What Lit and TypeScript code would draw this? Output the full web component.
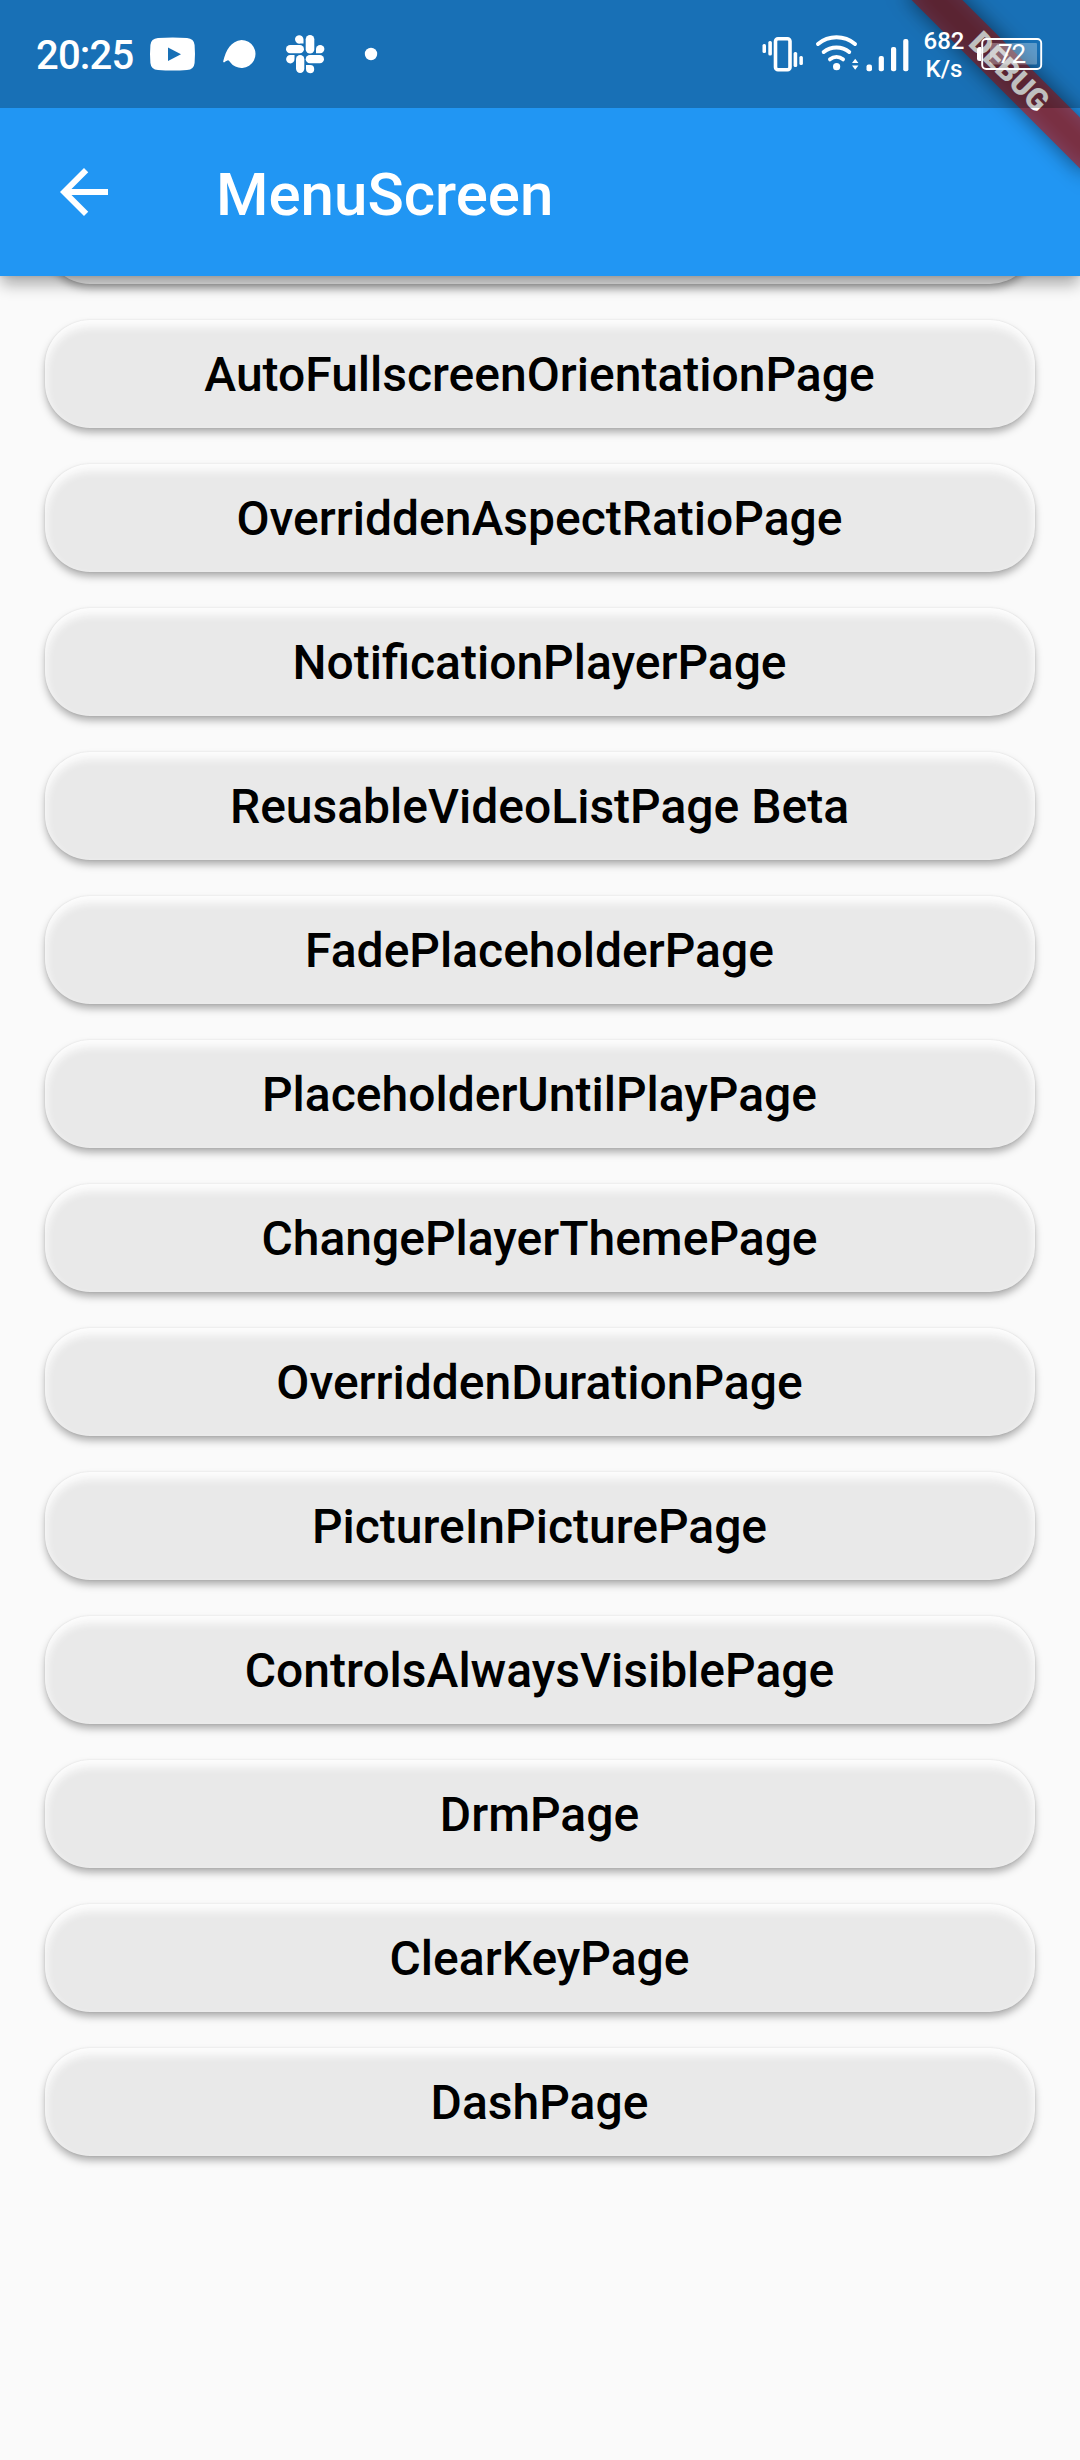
import { LitElement, html, css } from "lit";
import { customElement, property } from "lit/decorators.js";

// The first entry is scrolled under the app bar, only its lower rim shows.
const PAGES = [
  "",
  "AutoFullscreenOrientationPage",
  "OverriddenAspectRatioPage",
  "NotificationPlayerPage",
  "ReusableVideoListPage Beta",
  "FadePlaceholderPage",
  "PlaceholderUntilPlayPage",
  "ChangePlayerThemePage",
  "OverriddenDurationPage",
  "PictureInPicturePage",
  "ControlsAlwaysVisiblePage",
  "DrmPage",
  "ClearKeyPage",
  "DashPage",
];

@customElement("status-bar")
class StatusBar extends LitElement {
  static styles = css`
    :host {
      display: flex;
      box-sizing: border-box;
      height: 108px;
      padding: 0 37px 0 36px;
      align-items: flex-start;
      justify-content: space-between;
      background: rgba(0, 0, 0, 0.25);
      color: #fff;
      font-family: Roboto, "Liberation Sans", sans-serif;
    }
    .side {
      display: flex;
      align-items: flex-start;
    }
    svg {
      display: block;
      flex: none;
      height: 108px;
    }
    .clock {
      width: 113px;
      padding-top: 32px;
      font-size: 40px;
      line-height: 47px;
      font-weight: 500;
      letter-spacing: -0.8px;
      white-space: nowrap;
    }
    .speed {
      width: 50px;
      margin-left: 10px;
      padding-top: 27px;
      font-size: 24px;
      line-height: 28px;
      font-weight: 500;
      text-align: center;
    }
    .battery {
      position: relative;
      margin-left: 7px;
    }
    .level {
      position: absolute;
      left: 22px;
      top: 39px;
      font-size: 26px;
      line-height: 30px;
      letter-spacing: -1px;
    }
  `;

  render() {
    return html`
      <div class="side">
        <div class="clock">20:25</div>
        <svg width="222" viewBox="149 0 222 108" style="overflow:visible" fill="#fff">
          <path d="M158 38q15-1 29 0q7 .5 7.600 7q.8 9 0 18q-.6 6.500-7.600 7q-14 1-29 0q-7-.5-7.600-7q-.8-9 0-18q.6-6.500 7.600-7zM168 47.500v13.500l13-6.700z" fill-rule="evenodd" />
          <path d="M241.500 40a14 14 0 1 1-11.500 22q-1-1.500-2-1.800q-2.500.8-4 2.300q-1-.2-.8-1.200C226 50 231 41 241.500 40z" />
          <g>
            <rect x="305.700" y="35" width="8.600" height="18.500" rx="4.300" />
            <path d="M303.500 43.500h-3.200a4.250 4.250 0 1 1 3.200-4.200z" />
            <rect x="286" y="45" width="18" height="8.300" rx="4.150" />
            <path d="M316 53.300v-4.200a4.200 4.200 0 1 1 4.200 4.200z" />
            <rect x="305.700" y="55" width="18.300" height="8.300" rx="4.150" />
            <path d="M294.500 55v4a4.200 4.200 0 1 1-4.200-4z" />
            <rect x="296" y="55" width="8.300" height="18" rx="4.150" />
            <path d="M306 65h4.200a4.100 4.100 0 1 1-4.200 4.100z" />
          </g>
          <circle cx="371" cy="54" r="6.200" />
        </svg>
      </div>
      <div class="side">
        <svg width="149" viewBox="760 0 149 108" fill="#fff">
          <g>
            <rect x="775.500" y="38.700" width="14.500" height="31" rx="2.500" fill="none" stroke="#fff" stroke-width="3.600" />
            <rect x="762.500" y="44" width="3.500" height="9" rx="1.500" />
            <rect x="768.300" y="41" width="3.600" height="14.500" rx="1.500" />
            <rect x="793.600" y="52" width="3.600" height="15" rx="1.500" />
            <rect x="799.400" y="56" width="3.500" height="9" rx="1.500" />
          </g>
          <g fill="none" stroke="#fff" stroke-width="4" stroke-linecap="round">
            <path d="M818 44a29 29 0 0 1 37 0" />
            <path d="M823.700 52a20 20 0 0 1 25.500 0" />
            <path d="M830 59.300a10.500 10.500 0 0 1 13 0" />
          </g>
          <circle cx="836.600" cy="66.700" r="3.600" />
          <path d="M852 63l3.200-4.300l3.200 4.300zM852 65.500l3.200 4.300l3.200-4.300z" />
          <rect x="866.500" y="64.500" width="5.500" height="6.700" rx="2" />
          <rect x="878.700" y="56" width="5.200" height="15.200" rx="2" />
          <rect x="891" y="47" width="5.200" height="24.200" rx="2" />
          <rect x="903.200" y="39" width="5.200" height="32.200" rx="2" />
        </svg>
        <div class="speed">682<br />K/s</div>
        <div class="battery">
          <svg width="67" viewBox="976 0 67 108" fill="#fff">
            <rect x="990" y="43" width="47" height="21.500" rx="1" opacity=".3" />
            <rect x="982.200" y="39" width="59" height="30" rx="4" fill="none" stroke="#fff" stroke-width="1.900" />
            <path d="M981 47v14h-1.500q-2.500 0-2.500-2.500v-9q0-2.500 2.500-2.500z" />
          </svg>
          <div class="level">72</div>
        </div>
      </div>
    `;
  }
}

@customElement("menu-button")
class MenuButton extends LitElement {
  @property() label = "";

  static styles = css`
    :host {
      display: block;
      flex: none;
    }
    .button {
      display: flex;
      box-sizing: border-box;
      width: 100%;
      height: 108px;
      align-items: center;
      justify-content: center;
      border: 0;
      padding: 2px 1px 0 0;
      border-radius: 45px;
      background: #e9e9e9;
      box-shadow:
        inset 0 6px 9px 1px #fdfdfd,
        0 0 2px rgba(0, 0, 0, 0.1),
        0 5px 9px -1px rgba(0, 0, 0, 0.34);
      color: #000;
      font: 500 48px/56px Roboto, "Liberation Sans", sans-serif;
    }
  `;

  render() {
    return html`<button class="button">${this.label}</button>`;
  }
}

@customElement("app-root")
class AppRoot extends LitElement {
  static styles = css`
    :host {
      display: block;
      position: relative;
      width: 1080px;
      height: 2460px;
      overflow: hidden;
      background: #fafafa;
      font-family: Roboto, "Liberation Sans", sans-serif;
    }
    .screen {
      display: flex;
      flex-direction: column;
      height: 100%;
    }
    .bar {
      display: flex;
      flex: none;
      box-sizing: border-box;
      height: 276px;
      padding: 108px 48px 0;
      align-items: center;
      gap: 96px;
      position: relative;
      z-index: 1;
      background: #2196f3;
      color: #fff;
      box-shadow:
        0 9px 15px -1px rgba(0, 0, 0, 0.33),
        0 0 4px rgba(0, 0, 0, 0.1);
    }
    .back {
      width: 72px;
      height: 72px;
      fill: #fff;
    }
    .title {
      margin: 0;
      padding-top: 5px;
      font-size: 60px;
      line-height: 70px;
      font-weight: 500;
    }
    .list {
      display: flex;
      flex: 1;
      min-height: 0;
      flex-direction: column;
      gap: 36px;
      padding: 0 45px;
      overflow: hidden;
    }
    .list menu-button:first-child {
      margin-top: -100px;
    }
    .status {
      position: absolute;
      inset: 0 0 auto;
      z-index: 3;
    }
    .banner {
      position: absolute;
      z-index: 2;
      left: 888.500px;
      top: 53.500px;
      width: 240px;
      height: 36px;
      transform: rotate(45deg);
      color: #fff;
      font-size: 30.600px;
      line-height: 36px;
      font-weight: 900;
      text-align: center;
    }
    .shade,
    .ribbon {
      position: absolute;
      inset: 0 -6px;
    }
    .shade {
      background: rgba(0, 0, 0, 0.5);
      filter: blur(10.900px);
    }
    .ribbon {
      background: rgba(183, 28, 28, 0.627);
    }
    .word {
      position: relative;
    }
  `;

  render() {
    return html`
      <div class="screen">
        <header class="bar">
          <svg class="back" viewBox="0 0 24 24">
            <path d="M20 11H7.830l5.590-5.590L12 4l-8 8 8 8 1.410-1.410L7.830 13H20v-2z" />
          </svg>
          <h1 class="title">MenuScreen</h1>
        </header>
        <main class="list">
          ${PAGES.map((p) => html`<menu-button .label=${p}></menu-button>`)}
        </main>
      </div>
      <div class="banner">
        <div class="shade"></div>
        <div class="ribbon"></div>
        <span class="word">DEBUG</span>
      </div>
      <status-bar class="status"></status-bar>
    `;
  }
}
